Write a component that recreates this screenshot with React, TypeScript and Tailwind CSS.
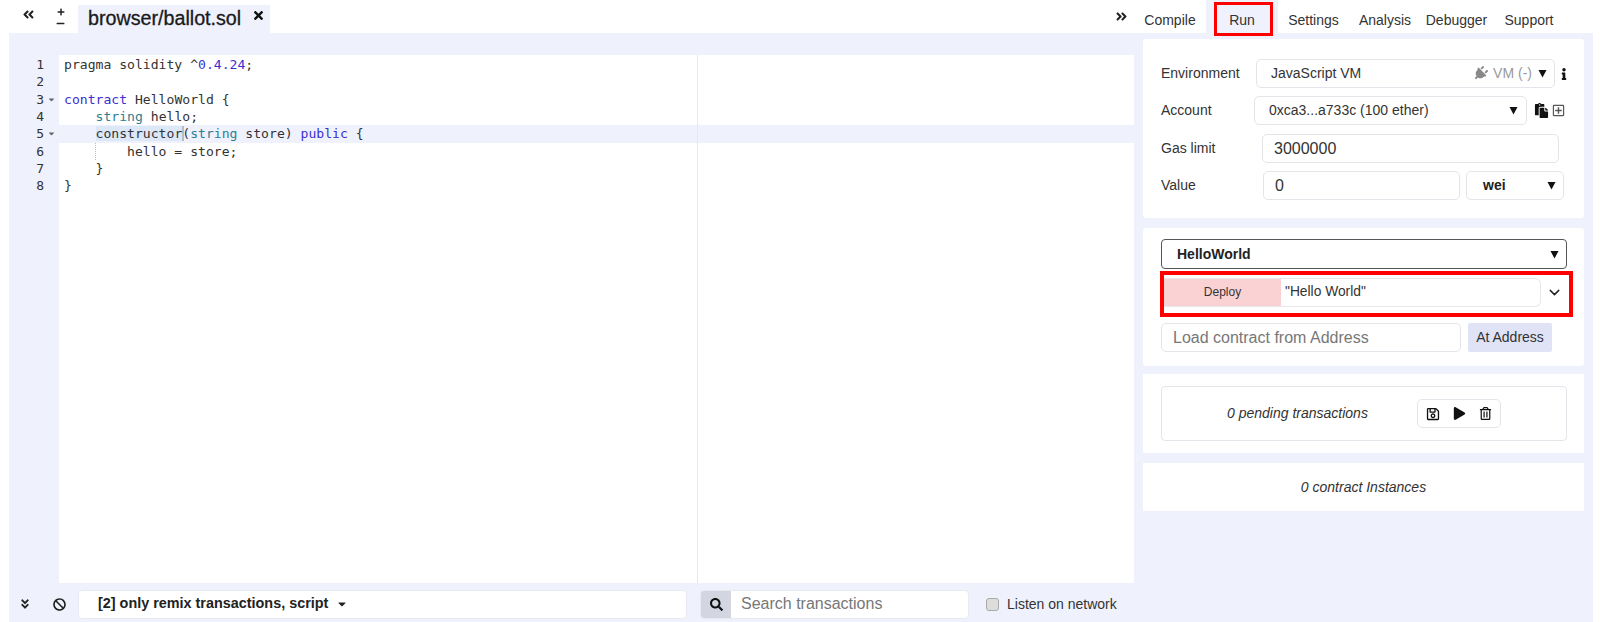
import { FaAngleDoubleLeft, FaAngleDoubleRight, FaAngleDoubleDown, FaBan, FaCaretDown, FaInfo, FaMinus, FaPaste, FaPlay, FaPlug, FaPlus, FaRegPlusSquare, FaRegSave, FaRegTrashAlt, FaSearch, FaTimes } from 'react-icons/fa'
import { FiChevronDown } from 'react-icons/fi'

const KW = 'text-[#3b2fd0]'
const TYPE = 'text-[#2c7f92]'

const CODE: { parts: [string, string?][]; fold?: boolean; active?: boolean }[] = [
  { parts: [['pragma solidity ^'], ['0.4.24', KW], [';']] },
  { parts: [['']] },
  { parts: [['contract', KW], [' HelloWorld {']], fold: true },
  { parts: [['    '], ['string', TYPE], [' hello;']] },
  { parts: [['    '], ['constructor', 'bg-[#dce8f8] shadow-[2px_0_0_#b8bcc4]'], ['('], ['string', TYPE], [' store) '], ['public', KW], [' {']], fold: true, active: true },
  { parts: [['        hello = store;']] },
  { parts: [['    }']] },
  { parts: [['}']] },
]

const TABS = [
  { name: 'Compile', w: 'w-[72px]' },
  { name: 'Run', w: 'w-[72px]', active: true },
  { name: 'Settings', w: 'w-[71px]' },
  { name: 'Analysis', w: 'w-[72px]' },
  { name: 'Debugger', w: 'w-[71px]' },
  { name: 'Support', w: 'w-[74px]' },
]

const FIELD = 'h-[29px] shrink-0 bg-white border border-[#e3e5ea] rounded-[5px] flex items-center'

function Caret({ className = '' }: { className?: string }) {
  return (
    <svg width="9" height="9" viewBox="0 0 9 9" className={`shrink-0 ${className}`}>
      <path d="M0.5 1h8L4.5 8.5z" fill="#111" />
    </svg>
  )
}

function EditorPane() {
  return (
    <div className="w-[1134px] shrink-0 flex flex-col h-[622px]">
      <div className="h-[33px] flex items-end">
        <div className="w-[78px] flex h-full items-start text-[#222]">
          <FaAngleDoubleLeft className="ml-[22px] mt-[8px] text-[13px]" />
          <div className="ml-[21px] mt-[8px] flex flex-col items-center gap-[3px]">
            <FaPlus className="text-[8px]" />
            <FaMinus className="text-[9px]" />
          </div>
        </div>
        <div className="h-[28px] w-[192px] bg-[#eff1fd] flex items-start pl-[10px] relative">
          <span className="text-[19.7px] leading-[27px] font-medium text-[#1a1a1a] [-webkit-text-stroke:0.3px_#1a1a1a]">browser/ballot.sol</span>
          <FaTimes className="absolute left-[174px] top-[4px] text-[13px] text-[#111]" />
        </div>
      </div>
      <div className="flex-1 ml-[9px] bg-[#eff1fd] flex flex-col min-h-0">
        <div className="flex-1 mt-[22px] flex min-h-0">
          <div className="w-[50px] shrink-0 pt-[1px]">
            {CODE.map((line, i) => (
              <div key={i} className="h-[17.33px] flex items-center text-[13px] font-['DejaVu_Sans_Mono',monospace] text-[#333]">
                <span className="w-[35px] text-right">{i + 1}</span>
                {line.fold && <FaCaretDown className="ml-[3px] text-[9px] text-[#666]" />}
              </div>
            ))}
          </div>
          <div className="flex-1 bg-white relative pt-[1px] font-['DejaVu_Sans_Mono',monospace] text-[13.1px] text-[#333]">
            {CODE.map((line, i) => (
              <div key={i} className={`h-[17.33px] leading-[17.33px] pl-[5px] whitespace-pre ${line.active ? 'bg-[#eff1fd]' : ''}`}>
                {line.parts.map((p, j) => <span key={j} className={p[1]}>{p[0]}</span>)}
              </div>
            ))}
            <div className="absolute left-[638px] top-0 bottom-0 w-px bg-[#e6e8f0]" />
            <div className="absolute left-[36px] top-[88px] h-[17px] border-l border-dotted border-[#bbb]" />
          </div>
        </div>
        <div className="h-[39px] shrink-0 flex items-center pt-[3px] text-[14px] text-[#333]">
          <FaAngleDoubleDown className="ml-[10px] text-[12px] text-[#222]" />
          <FaBan className="ml-[22px] text-[13px] text-[#222]" />
          <div className="ml-[12px] w-[609px] h-[29px] bg-white border border-[#e8eaf2] rounded-[4px] flex items-center pl-[19px] font-bold text-[14.4px] text-[#222]">
            [2] only remix transactions, script
            <FaCaretDown className="ml-[8px] text-[12px]" />
          </div>
          <div className="ml-[13px] w-[269px] h-[29px] bg-white border border-[#e8eaf2] rounded-[4px] flex items-center overflow-hidden">
            <div className="w-[30px] h-full bg-[#d3d6e0] flex items-center justify-center">
              <FaSearch className="text-[13px] text-[#111]" />
            </div>
            <span className="ml-[10px] text-[16px] text-[#777]">Search transactions</span>
          </div>
          <div className="ml-[17px] w-[13px] h-[13px] bg-[#ddd] border border-[#aaa] rounded-[3px]" />
          <span className="ml-[8px]">Listen on network</span>
        </div>
      </div>
    </div>
  )
}

function RunTab() {
  return (
    <div className="w-[466px] shrink-0 flex flex-col h-[622px]">
      <div className="h-[33px] flex text-[14px] text-[#333] relative">
        <FaAngleDoubleRight className="absolute left-[-19px] top-[10px] text-[13px] text-[#222]" />
        {TABS.map(t => (
          <div key={t.name} className={`${t.w} h-full flex items-center justify-center pt-[7px] ${t.active ? 'bg-[#eff1fd] relative' : ''}`}>
            {t.name}
            {t.active && <div className="absolute left-[8px] top-[2px] w-[59px] h-[34px] border-[3px] border-[#ff0000]" />}
          </div>
        ))}
      </div>
      <div className="flex-1 bg-[#eff1fd] mr-[7px] px-[9px] flex flex-col pt-[6px] text-[14px] text-[#333]">
        <div className="h-[179px] bg-white rounded-[3px] pl-[18px] pr-[17px] pt-[20px]">
          <div className="flex items-center h-[29px]">
            <span className="w-[95px] shrink-0">Environment</span>
            <div className={`${FIELD} w-[299px] pl-[14px] pr-[7px]`}>
              <span>JavaScript VM</span>
              <FaPlug className="ml-auto text-[15px] text-[#888] rotate-45" />
              <span className="ml-[5px] text-[#999]">VM (-)</span>
              <Caret className="ml-[6px]" />
            </div>
            <FaInfo className="ml-[3px] shrink-0 text-[12px] text-[#111]" />
          </div>
          <div className="flex items-center h-[29px] mt-[8px]">
            <span className="w-[93px] shrink-0">Account</span>
            <div className={`${FIELD} w-[273px] pl-[14px] pr-[8px]`}>
              <span>0xca3...a733c (100 ether)</span>
              <Caret className="ml-auto" />
            </div>
            <FaPaste className="ml-[7px] shrink-0 text-[15px] text-[#111]" />
            <FaRegPlusSquare className="ml-[3px] shrink-0 text-[13px] text-[#555]" />
          </div>
          <div className="flex items-center h-[29px] mt-[9px]">
            <span className="w-[101px] shrink-0">Gas limit</span>
            <div className={`${FIELD} w-[297px] pl-[11px] text-[16px]`}>3000000</div>
          </div>
          <div className="flex items-center h-[29px] mt-[8px]">
            <span className="w-[102px] shrink-0">Value</span>
            <div className={`${FIELD} w-[197px] pl-[11px] text-[16px]`}>0</div>
            <div className={`${FIELD} w-[98px] ml-[6px] pl-[16px] pr-[7px] font-bold text-[#222]`}>
              wei
              <Caret className="ml-auto" />
            </div>
          </div>
        </div>
        <div className="h-[138px] bg-white rounded-[3px] mt-[10px] pl-[18px] pr-[17px] pt-[11px]">
          <div className="h-[30px] border border-[#555] rounded-[4px] flex items-center pl-[15px] pr-[7px] font-bold text-[#222]">
            HelloWorld
            <Caret className="ml-auto" />
          </div>
          <div className="mt-[2px] -ml-[1px] w-[413px] h-[46px] border-[4px] border-[#ff0000] flex items-center pb-[4px] pl-0">
            <div className="w-[377px] h-[29px] flex border border-[#e8e8ec] border-l-0 rounded-r-[6px] overflow-hidden">
              <div className="w-[117px] bg-[#fbd2d4] flex items-center justify-center text-[12px]">Deploy</div>
              <div className="flex-1 flex items-center pl-[4px] text-[13.8px]">"Hello World"</div>
            </div>
            <FiChevronDown className="ml-[5px] text-[17px] text-[#222]" />
          </div>
          <div className="flex items-center mt-[6px]">
            <div className={`${FIELD} w-[300px] pl-[11px] text-[16px] text-[#777]`}>Load contract from Address</div>
            <div className="ml-[7px] w-[84px] h-[29px] bg-[#e0e3f6] rounded-[2px] flex items-center justify-center">At Address</div>
          </div>
        </div>
        <div className="h-[79px] bg-white mt-[8px] pl-[18px] pr-[17px] pt-[12px]">
          <div className="h-[55px] border border-[#e3e5ea] rounded-[4px] flex items-center">
            <span className="ml-[65px] w-[144px] italic whitespace-nowrap">0 pending transactions</span>
            <div className={`ml-[46px] ${FIELD} w-[84px] justify-center gap-[13px] text-[#111]`}>
              <FaRegSave className="text-[14px]" />
              <FaPlay className="text-[13px]" />
              <FaRegTrashAlt className="text-[13px]" />
            </div>
          </div>
        </div>
        <div className="h-[48px] bg-white mt-[10px] flex items-center justify-center italic">0 contract Instances</div>
      </div>
    </div>
  )
}

export default function App() {
  return (
    <div className="flex w-[1600px] h-[622px] overflow-hidden bg-white font-['Liberation_Sans',sans-serif]">
      <EditorPane />
      <RunTab />
    </div>
  )
}
